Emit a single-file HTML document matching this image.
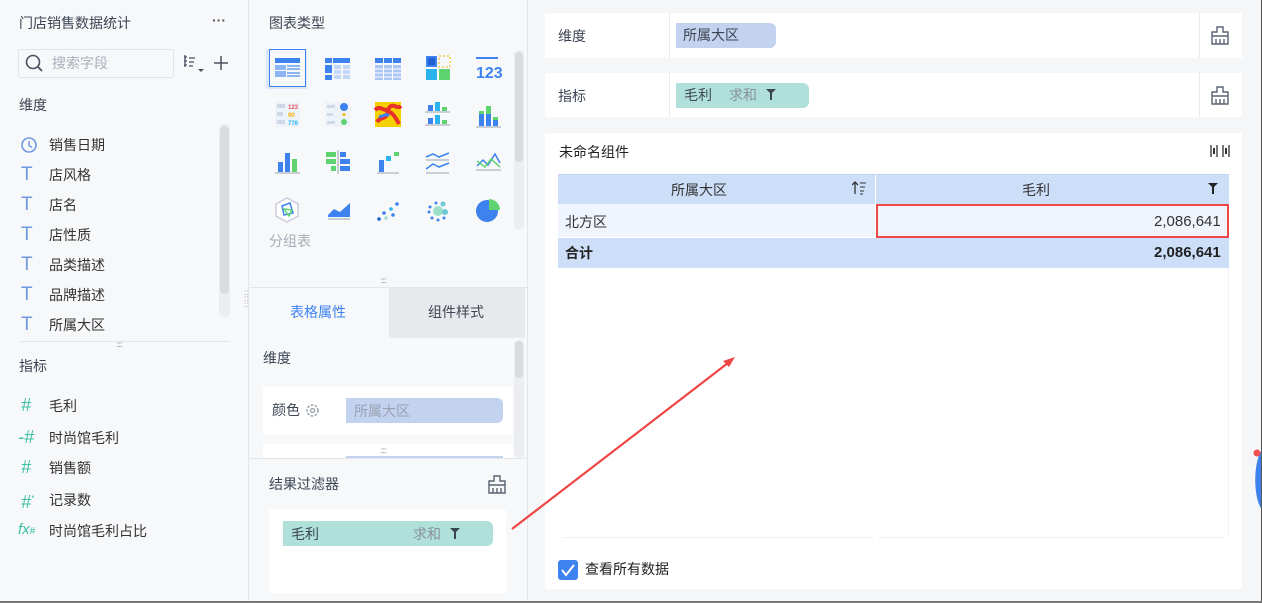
<!DOCTYPE html>
<html><head><meta charset="utf-8"><style>
*{margin:0;padding:0;box-sizing:border-box}
body{width:1262px;height:603px;overflow:hidden;background:#f5f6f8;font-family:"Liberation Sans","Noto Sans CJK SC",sans-serif;font-size:14px;color:#333;position:relative}
.a{position:absolute}
.t{position:absolute;white-space:nowrap;line-height:20px}
</style></head><body>
<!-- left panel -->
<div class="a" style="left:0;top:0;width:249px;height:601px;background:#f7f8fa;border-right:1px solid #e3e5e9"></div>
<div class="t" style="left:19px;top:13px;color:#3d4553">门店销售数据统计</div>
<div class="t" style="left:212px;top:10px;color:#555;font-weight:bold">···</div>
<div class="a" style="left:18px;top:49px;width:156px;height:29px;border:1px solid #e1e3e8;border-radius:2px;background:#f7f8fa"></div>
<svg class="a" style="left:24px;top:53px" width="20" height="20"><circle cx="9" cy="9" r="6.5" fill="none" stroke="#4a5261" stroke-width="1.6"/><path d="M14 14l4 4" stroke="#4a5261" stroke-width="1.8"/></svg>
<div class="t" style="left:52px;top:53px;color:#aab0ba">搜索字段</div>
<svg class="a" style="left:182px;top:53px" width="28" height="24"><path d="M2 4h3M2 8h3M2 12h3M3 2v12M7 5h6M7 9h5M7 13h4" stroke="#4a5261" stroke-width="1.3" fill="none"/><path d="M16 16h6l-3 3z" fill="#4a5261"/></svg>
<svg class="a" style="left:212px;top:54px" width="18" height="18"><path d="M9 2v14M2 9h14" stroke="#4a5261" stroke-width="1.5"/></svg>
<div class="t" style="left:19px;top:95px;color:#3d4553">维度</div>
<div class="a" style="left:219px;top:124px;width:11px;height:193px;background:#ebedf0;border-radius:5px"></div>
<div class="a" style="left:220px;top:126px;width:9px;height:168px;background:#d9dbdf;border-radius:5px"></div>
<svg class="a" style="left:20px;top:136px" width="18" height="18"><circle cx="9" cy="9" r="7" fill="none" stroke="#6f98e0" stroke-width="1.6"/><path d="M9 5v4.5l3 2" stroke="#6f98e0" stroke-width="1.5" fill="none"/></svg>
<div class="t" style="left:49px;top:135px">销售日期</div>
<div class="t" style="left:21px;top:163px;color:#6f98e0;font-size:19px;line-height:24px">T</div><div class="t" style="left:49px;top:165px">店风格</div>
<div class="t" style="left:21px;top:193px;color:#6f98e0;font-size:19px;line-height:24px">T</div><div class="t" style="left:49px;top:195px">店名</div>
<div class="t" style="left:21px;top:223px;color:#6f98e0;font-size:19px;line-height:24px">T</div><div class="t" style="left:49px;top:225px">店性质</div>
<div class="t" style="left:21px;top:253px;color:#6f98e0;font-size:19px;line-height:24px">T</div><div class="t" style="left:49px;top:255px">品类描述</div>
<div class="t" style="left:21px;top:283px;color:#6f98e0;font-size:19px;line-height:24px">T</div><div class="t" style="left:49px;top:285px">品牌描述</div>
<div class="t" style="left:21px;top:313px;color:#6f98e0;font-size:19px;line-height:24px">T</div><div class="t" style="left:49px;top:315px">所属大区</div>
<div class="a" style="left:19px;top:341px;width:211px;height:1px;background:#e3e5e9"></div>
<div class="t" style="left:116px;top:340px;color:#999;font-size:8px;line-height:10px;letter-spacing:-1px">:::::</div>
<div class="t" style="left:19px;top:356px;color:#3d4553">指标</div>
<div class="t" style="left:21px;top:395px;color:#3dbfa5;font-size:18px;font-style:italic">#</div><div class="t" style="left:49px;top:396px">毛利</div>
<div class="t" style="left:18px;top:427px;color:#3dbfa5;font-size:18px;font-style:italic">-#</div><div class="t" style="left:49px;top:428px">时尚馆毛利</div>
<div class="t" style="left:21px;top:457px;color:#3dbfa5;font-size:18px;font-style:italic">#</div><div class="t" style="left:49px;top:458px">销售额</div>
<div class="t" style="left:21px;top:489px;color:#3dbfa5;font-size:18px;font-style:italic">#<sup style="font-size:8px">*</sup></div><div class="t" style="left:49px;top:490px">记录数</div>
<div class="t" style="left:18px;top:520px;color:#3dbfa5;font-size:15px;font-style:italic">fx<span style="font-size:10px">#</span></div><div class="t" style="left:49px;top:521px">时尚馆毛利占比</div>

<!-- middle panel -->
<div class="a" style="left:250px;top:0;width:278px;height:601px;background:#f7f8fa;border-right:1px solid #e3e5e9"></div>
<div class="t" style="left:269px;top:13px;color:#3d4553">图表类型</div>
<div class="a" style="left:266px;top:49px;width:41px;height:40px;background:#dfe8f7"></div>
<div class="a" style="left:269px;top:49px;width:37px;height:38px;border:1.5px solid #3d82ef;background:#f7f8fa"></div>
<svg class="a" style="left:0;top:0;pointer-events:none" width="528" height="260">
<g transform="translate(275,58)"><rect width="25" height="5" fill="#3d82ef"/><rect y="7" width="11" height="5" fill="#8db5f3"/><rect x="12" y="7" width="13" height="2" fill="#8db5f3"/><rect x="12" y="10" width="13" height="2" fill="#8db5f3"/><rect y="13" width="11" height="6" fill="#8db5f3"/><rect x="12" y="14" width="13" height="2" fill="#8db5f3"/><rect x="12" y="17" width="13" height="2" fill="#8db5f3"/></g>
<g transform="translate(325,58)"><rect x="8" width="17" height="5" fill="#3d82ef"/><rect width="7" height="5" fill="#3d82ef"/><rect y="7" width="7" height="8" fill="#3d82ef"/><rect y="17" width="7" height="5" fill="#3d82ef"/><rect x="9" y="7" width="7" height="4" fill="#c3d7f6"/><rect x="18" y="7" width="7" height="4" fill="#c3d7f6"/><rect x="9" y="12" width="7" height="4" fill="#c3d7f6"/><rect x="18" y="12" width="7" height="4" fill="#c3d7f6"/><rect x="9" y="17" width="7" height="4" fill="#c3d7f6"/><rect x="18" y="17" width="7" height="4" fill="#c3d7f6"/></g>
<g transform="translate(375,58)"><rect width="8" height="5" fill="#3d82ef"/><rect x="9" width="8" height="5" fill="#3d82ef"/><rect x="18" width="8" height="5" fill="#3d82ef"/><rect y="7" width="26" height="15" fill="#a9c6f4"/><path d="M0 11h26M0 15h26M0 19h26M8.5 7v15M17.5 7v15" stroke="#fff"/></g>
<g transform="translate(426,56)"><rect width="11" height="11" fill="#3d82ef"/><rect x="2" y="2" width="7" height="7" fill="#1f5fcf"/><rect x="13" width="11" height="11" fill="none" stroke="#f5b400" stroke-dasharray="2 2"/><rect y="13" width="11" height="11" fill="#2bb3ef"/><rect x="13" y="13" width="11" height="11" fill="#5fd36f"/></g>
<rect x="476" y="57" width="22" height="2" fill="#3d82ef"/><text x="476" y="78" font-size="16" font-weight="bold" fill="#3d82ef" font-family="Liberation Sans Narrow,Liberation Sans">123</text>
<g transform="translate(275,102)"><rect width="25" height="25" fill="#eef2f9"/><rect x="2" y="2" width="8" height="4" fill="#cfd8e6"/><text x="13" y="7" font-size="6" fill="#e85060" font-weight="bold">123</text><rect x="2" y="10" width="6" height="4" fill="#cfd8e6"/><text x="13" y="15" font-size="6" fill="#f5b400" font-weight="bold">90</text><rect x="2" y="18" width="8" height="4" fill="#cfd8e6"/><text x="13" y="23" font-size="6" fill="#2bb3ef" font-weight="bold">778</text></g>
<g transform="translate(325,102)"><rect width="25" height="25" fill="#eef2f9"/><rect x="2" y="3" width="8" height="3" fill="#cfd8e6"/><circle cx="19" cy="5" r="4" fill="#3d82ef"/><rect x="2" y="11" width="6" height="3" fill="#cfd8e6"/><circle cx="19" cy="12.5" r="1.5" fill="#f5b400"/><rect x="2" y="19" width="8" height="3" fill="#cfd8e6"/><circle cx="19" cy="20" r="3" fill="#5fd36f"/></g>
<g transform="translate(375,102)"><rect width="26" height="25" fill="#f5d000"/><path d="M0 8c6-6 10 4 14-2s8 2 12-2M2 20c4-6 8-2 10-8s8 2 12 10" stroke="#e8302a" stroke-width="4" fill="none"/><path d="M4 14c4 2 6-4 10 0" stroke="#3d82ef" stroke-width="3" fill="none"/></g>
<g transform="translate(425,102)"><rect x="3" y="3" width="5" height="6" fill="#3d82ef"/><rect x="10" width="5" height="9" fill="#2bb3ef"/><rect x="17" y="5" width="5" height="4" fill="#5fd36f"/><path d="M0 10h25M0 23h25" stroke="#9aa3b0"/><rect x="3" y="16" width="5" height="6" fill="#3d82ef"/><rect x="10" y="13" width="5" height="9" fill="#2bb3ef"/><rect x="17" y="18" width="5" height="4" fill="#5fd36f"/></g>
<g transform="translate(476,104)"><rect x="3" y="10" width="5" height="12" fill="#3d82ef"/><rect x="3" y="7" width="5" height="3" fill="#5fd36f"/><rect x="10" y="10" width="5" height="12" fill="#3d82ef"/><rect x="10" y="2" width="5" height="8" fill="#5fd36f"/><rect x="17" y="16" width="5" height="6" fill="#3d82ef"/><rect x="17" y="13" width="5" height="3" fill="#5fd36f"/><path d="M0 23h25" stroke="#9aa3b0"/></g>
<g transform="translate(275,150)"><rect x="3" y="12" width="5" height="10" fill="#3d82ef"/><rect x="10" y="3" width="5" height="19" fill="#3d82ef"/><rect x="17" y="9" width="5" height="13" fill="#5fd36f"/><path d="M0 23h25" stroke="#9aa3b0"/></g>
<g transform="translate(325,150)"><rect x="1" y="2" width="10" height="5" fill="#5fd36f"/><rect x="15" y="2" width="6" height="5" fill="#3d82ef"/><rect x="1" y="9" width="10" height="5" fill="#5fd36f"/><rect x="15" y="9" width="10" height="5" fill="#3d82ef"/><rect x="6" y="16" width="5" height="5" fill="#5fd36f"/><rect x="15" y="16" width="10" height="5" fill="#3d82ef"/><path d="M13 0v24" stroke="#9aa3b0"/></g>
<g transform="translate(377,152)"><rect x="2" y="8" width="5" height="12" fill="#3d82ef"/><rect x="9" y="4" width="5" height="5" fill="#2bb3ef"/><rect x="17" y="0" width="5" height="4" fill="#5fd36f"/><path d="M0 21h22" stroke="#9aa3b0"/></g>
<g transform="translate(426,151)" fill="none" stroke="#3d82ef" stroke-width="1.5"><path d="M0 6l7-3 6 3 10-4"/><path d="M0 18l7-5 6 3 10-4" /><path d="M0 9h23M0 22h23" stroke="#9aa3b0" stroke-width="1"/></g>
<g transform="translate(476,151)" fill="none" stroke-width="1.5"><path d="M1 15l6-6 5 5 7-11 5 9" stroke="#3d82ef"/><path d="M1 10l8 6 6-8 9 8" stroke="#5fd36f"/><path d="M0 19h25" stroke="#9aa3b0" stroke-width="1"/></g>
<g transform="translate(275,197)"><path d="M12 1l11 6v12l-11 6-11-6V7z" fill="#fff" stroke="#ccd" stroke-width="1.5"/><path d="M7 9l8-3 3 10-9 2z" fill="none" stroke="#3d82ef" stroke-width="1.5"/><path d="M9 12l8 1-3 6z" fill="none" stroke="#5fd36f" stroke-width="1.5"/></g>
<g transform="translate(326,199)"><path d="M2 16l6-6 6 3 10-9v14H2z" fill="#3d82ef"/><path d="M2 20h22" stroke="#9aa3b0"/></g>
<g transform="translate(376,200)"><circle cx="3" cy="19" r="1.8" fill="#1f5fcf"/><circle cx="8" cy="13" r="1.8" fill="#3d82ef"/><circle cx="10" cy="18" r="1.8" fill="#9de0c8"/><circle cx="15" cy="9" r="1.8" fill="#2bb3ef"/><circle cx="17" cy="15" r="1.8" fill="#3d82ef"/><circle cx="21" cy="4" r="1.8" fill="#3d82ef"/></g>
<g transform="translate(426,200)"><circle cx="12" cy="11" r="5" fill="#9de0c8"/><circle cx="19" cy="12" r="3" fill="#6ec7d6"/><circle cx="17" cy="4" r="2.5" fill="#6ec7d6"/><circle cx="10" cy="3" r="1.5" fill="#3d82ef"/><circle cx="4" cy="7" r="1.5" fill="#3d82ef"/><circle cx="3" cy="12" r="1.5" fill="#3d82ef"/><circle cx="6" cy="18" r="1.5" fill="#3d82ef"/><circle cx="12" cy="20" r="1.5" fill="#3d82ef"/><circle cx="18" cy="18" r="1.5" fill="#3d82ef"/></g>
<g transform="translate(476,199)"><circle cx="11" cy="12" r="11" fill="#3d82ef"/><path d="M13 0a11 11 0 0 1 11 11h-11z" fill="#5fd36f"/></g>
</svg>
<div class="t" style="left:269px;top:231px;color:#a7adb7">分组表</div>
<div class="a" style="left:514px;top:50px;width:10px;height:180px;background:#ebedf0;border-radius:5px"></div>
<div class="a" style="left:515px;top:52px;width:8px;height:110px;background:#d9dbdf;border-radius:4px"></div>
<div class="t" style="left:380px;top:276px;color:#999;font-size:8px;line-height:10px;letter-spacing:-1px">:::::</div>
<div class="a" style="left:250px;top:287px;width:278px;height:1px;background:#e3e5e9"></div>
<div class="a" style="left:389px;top:288px;width:136px;height:50px;background:#e8e9ec"></div>
<div class="t" style="left:290px;top:302px;color:#3d82ef">表格属性</div>
<div class="t" style="left:428px;top:302px;color:#3d4553">组件样式</div>
<div class="t" style="left:263px;top:348px;color:#3d4553">维度</div>
<div class="a" style="left:514px;top:340px;width:10px;height:118px;background:#ebedf0;border-radius:5px"></div>
<div class="a" style="left:515px;top:341px;width:8px;height:37px;background:#d9dbdf;border-radius:4px"></div>
<div class="a" style="left:263px;top:387px;width:250px;height:47px;background:#fff"></div>
<div class="t" style="left:272px;top:400px;color:#3d4553">颜色</div>
<svg class="a" style="left:305px;top:403px" width="15" height="15"><circle cx="7.5" cy="7.5" r="5.5" fill="none" stroke="#9aa0aa" stroke-width="1.5" stroke-dasharray="2.5 1.5"/><circle cx="7.5" cy="7.5" r="2" fill="none" stroke="#9aa0aa" stroke-width="1.3"/></svg>
<div class="a" style="left:346px;top:398px;width:157px;height:25px;background:#c3d2ef;border-radius:0 6px 6px 0"></div>
<div class="t" style="left:354px;top:401px;color:#9aa3b3">所属大区</div>
<div class="a" style="left:263px;top:444px;width:250px;height:14px;background:#fff"></div>
<div class="a" style="left:346px;top:456px;width:157px;height:2px;background:#c3d2ef"></div>
<div class="t" style="left:380px;top:446px;color:#999;font-size:8px;line-height:10px;letter-spacing:-1px">:::::</div>
<div class="a" style="left:250px;top:458px;width:278px;height:1px;background:#e3e5e9"></div>
<div class="t" style="left:269px;top:474px;color:#3d4553">结果过滤器</div>
<svg class="a" style="left:487px;top:475px" width="20" height="20"><path d="M7 1h6v5h5v4H2V6h5z M2 10v8h16v-8 M6 13v5M10 13v5M14 13v5" fill="none" stroke="#5a6272" stroke-width="1.4"/></svg>
<div class="a" style="left:269px;top:510px;width:237px;height:83px;background:#fff"></div>
<div class="a" style="left:283px;top:521px;width:210px;height:25px;background:#b0e0da;border-radius:0 6px 6px 0"></div>
<div class="t" style="left:291px;top:524px;color:#3d4553">毛利</div>
<div class="t" style="left:413px;top:524px;color:#8a919c">求和</div>
<svg class="a" style="left:449px;top:527px" width="12" height="13"><path d="M1 1h10L7 5v7H5V5z" fill="#3d4553"/></svg>
<div class="t" style="left:244px;top:290px;color:#999;font-size:8px;line-height:6px;width:6px;white-space:normal">:: :: ::</div>

<!-- right -->
<div class="a" style="left:545px;top:13px;width:697px;height:45px;background:#fff"></div>
<div class="a" style="left:669px;top:13px;width:1px;height:45px;background:#e8eaee"></div>
<div class="a" style="left:1199px;top:13px;width:1px;height:45px;background:#e8eaee"></div>
<div class="t" style="left:558px;top:26px;color:#3d4553">维度</div>
<div class="a" style="left:676px;top:23px;width:100px;height:25px;background:#c3d2ef;border-radius:0 6px 6px 0"></div>
<div class="t" style="left:683px;top:25px;color:#3d4553">所属大区</div>
<svg class="a" style="left:1210px;top:26px" width="20" height="20"><path d="M7 1h6v5h5v4H2V6h5z M2 10v8h16v-8 M6 13v5M10 13v5M14 13v5" fill="none" stroke="#5a6272" stroke-width="1.4"/></svg>
<div class="a" style="left:545px;top:73px;width:697px;height:44px;background:#fff"></div>
<div class="a" style="left:669px;top:73px;width:1px;height:44px;background:#e8eaee"></div>
<div class="a" style="left:1199px;top:73px;width:1px;height:44px;background:#e8eaee"></div>
<div class="t" style="left:558px;top:86px;color:#3d4553">指标</div>
<div class="a" style="left:676px;top:83px;width:133px;height:25px;background:#b0e0da;border-radius:0 6px 6px 0"></div>
<div class="t" style="left:684px;top:85px;color:#3d4553">毛利</div>
<div class="t" style="left:729px;top:85px;color:#8a919c">求和</div>
<svg class="a" style="left:765px;top:88px" width="12" height="13"><path d="M1 1h10L7 5v7H5V5z" fill="#3d4553"/></svg>
<svg class="a" style="left:1210px;top:86px" width="20" height="20"><path d="M7 1h6v5h5v4H2V6h5z M2 10v8h16v-8 M6 13v5M10 13v5M14 13v5" fill="none" stroke="#5a6272" stroke-width="1.4"/></svg>

<div class="a" style="left:545px;top:133px;width:697px;height:456px;background:#fff"></div>
<div class="t" style="left:559px;top:142px;color:#222">未命名组件</div>
<svg class="a" style="left:1210px;top:144px" width="20" height="14"><path d="M1 1v12M19 1v12M7 1v12M13 1v12" stroke="#333" stroke-width="1.3"/><path d="M4 4v6M16 4v6" stroke="#333" stroke-width="2"/></svg>
<div class="a" style="left:558px;top:174px;width:671px;height:1px;background:#c2d6f3"></div>
<div class="a" style="left:558px;top:175px;width:671px;height:29px;background:#cddff8"></div>
<div class="a" style="left:875px;top:175px;width:1px;height:29px;background:#fff"></div>
<div class="t" style="left:671px;top:180px;color:#333">所属大区</div>
<svg class="a" style="left:852px;top:181px" width="14" height="15"><path d="M3 1v12M0 4l3-3 3 3" fill="none" stroke="#333" stroke-width="1.3"/><path d="M8 2h6M8 6h5M8 10h4M8 13h3" stroke="#333"/></svg>
<div class="t" style="left:1022px;top:180px;color:#333">毛利</div>
<svg class="a" style="left:1207px;top:182px" width="12" height="13"><path d="M1 1h10L7 5v7H5V5z" fill="#222"/></svg>
<div class="a" style="left:558px;top:204px;width:671px;height:33px;background:#f0f5fd"></div>
<div class="a" style="left:875px;top:204px;width:1px;height:33px;background:#fff"></div>
<div class="t" style="left:565px;top:212px;color:#333">北方区</div>
<div class="a" style="left:876px;top:204px;width:353px;height:34px;border:2px solid #f04848"></div>
<div class="t" style="left:1154px;top:212px;color:#333;font-size:15px">2,086,641</div>
<div class="a" style="left:558px;top:238px;width:671px;height:30px;background:#cddff8"></div>
<div class="t" style="left:565px;top:243px;color:#222;font-weight:bold">合计</div>
<div class="t" style="left:1154px;top:243px;color:#222;font-weight:bold;font-size:15px">2,086,641</div>
<div class="a" style="left:1228px;top:268px;width:1px;height:268px;background:#eef0f3"></div>
<div class="a" style="left:562px;top:537px;width:311px;height:1px;background:#eef0f3"></div>
<div class="a" style="left:879px;top:537px;width:346px;height:1px;background:#eef0f3"></div>
<div class="a" style="left:558px;top:560px;width:20px;height:20px;background:#3d82ef;border-radius:3px"></div>
<svg class="a" style="left:558px;top:560px" width="20" height="20"><path d="M4 10l4 5 8-10" fill="none" stroke="#fff" stroke-width="2"/></svg>
<div class="t" style="left:585px;top:559px;color:#222">查看所有数据</div>

<svg class="a" style="left:0;top:0;pointer-events:none" width="1262" height="603">
<path d="M512 529L728 363" stroke="#f04545" stroke-width="2.2"/><path d="M735 357l-12 4 6 6z" fill="#f04545"/>
<path d="M1262 450c-9 12-9 48 0 60z" fill="#3d82ef"/><circle cx="1257" cy="453" r="3.5" fill="#f05050"/>
</svg>
<div class="a" style="left:1261px;top:0;width:1px;height:603px;background:#555"></div>
<div class="a" style="left:0;top:601px;width:1262px;height:2px;background:#777"></div>
</body></html>
